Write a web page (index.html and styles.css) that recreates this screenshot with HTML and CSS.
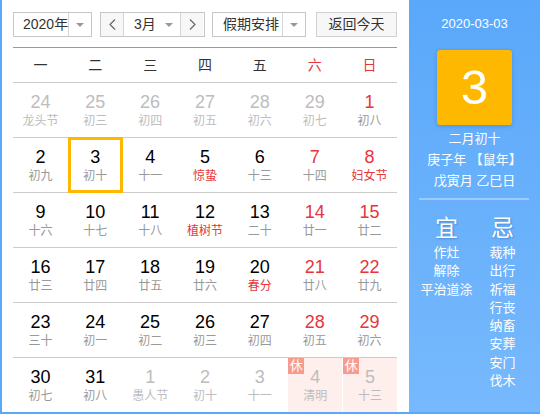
FILE: index.html
```html
<!DOCTYPE html>
<html lang="zh-CN">
<head>
    <meta charset="UTF-8">
    <title>万年历</title>
    <link rel="stylesheet" href="styles.css">
</head>
<body>
    <div class="calendar">
        <div class="main">
            <div class="toolbar">
                <div class="select year">
                    <span class="select-text">2020年</span>
                    <span class="select-arrow"><i class="caret"></i></span>
                </div>
                <div class="month-group">
                    <span class="nav-btn">
                        <svg width="7" height="11" viewBox="0 0 7 11"><polyline points="6,0.5 1,5.5 6,10.5" fill="none" stroke="#666" stroke-width="1.2"/></svg>
                    </span>
                    <span class="month-select">
                        <span class="select-text">3月</span>
                        <i class="caret"></i>
                    </span>
                    <span class="nav-btn">
                        <svg width="7" height="11" viewBox="0 0 7 11"><polyline points="1,0.5 6,5.5 1,10.5" fill="none" stroke="#666" stroke-width="1.2"/></svg>
                    </span>
                </div>
                <div class="select holiday">
                    <span class="select-text">假期安排</span>
                    <span class="select-arrow"><i class="caret"></i></span>
                </div>
                <div class="today-btn">返回今天</div>
            </div>

            <div class="grid">
                <div class="week">一</div>
                <div class="week">二</div>
                <div class="week">三</div>
                <div class="week">四</div>
                <div class="week">五</div>
                <div class="week weekend">六</div>
                <div class="week weekend">日</div>

                <div class="day other"><b>24</b><span>龙头节</span></div>
                <div class="day other"><b>25</b><span>初三</span></div>
                <div class="day other"><b>26</b><span>初四</span></div>
                <div class="day other"><b>27</b><span>初五</span></div>
                <div class="day other"><b>28</b><span>初六</span></div>
                <div class="day other"><b>29</b><span>初七</span></div>
                <div class="day weekend"><b>1</b><span>初八</span></div>

                <div class="day"><b>2</b><span>初九</span></div>
                <div class="day selected"><b>3</b><span>初十</span></div>
                <div class="day"><b>4</b><span>十一</span></div>
                <div class="day"><b>5</b><span class="festival">惊蛰</span></div>
                <div class="day"><b>6</b><span>十三</span></div>
                <div class="day weekend"><b>7</b><span>十四</span></div>
                <div class="day weekend"><b>8</b><span class="festival">妇女节</span></div>

                <div class="day"><b>9</b><span>十六</span></div>
                <div class="day"><b>10</b><span>十七</span></div>
                <div class="day"><b>11</b><span>十八</span></div>
                <div class="day"><b>12</b><span class="festival">植树节</span></div>
                <div class="day"><b>13</b><span>二十</span></div>
                <div class="day weekend"><b>14</b><span>廿一</span></div>
                <div class="day weekend"><b>15</b><span>廿二</span></div>

                <div class="day"><b>16</b><span>廿三</span></div>
                <div class="day"><b>17</b><span>廿四</span></div>
                <div class="day"><b>18</b><span>廿五</span></div>
                <div class="day"><b>19</b><span>廿六</span></div>
                <div class="day"><b>20</b><span class="festival">春分</span></div>
                <div class="day weekend"><b>21</b><span>廿八</span></div>
                <div class="day weekend"><b>22</b><span>廿九</span></div>

                <div class="day"><b>23</b><span>三十</span></div>
                <div class="day"><b>24</b><span>初一</span></div>
                <div class="day"><b>25</b><span>初二</span></div>
                <div class="day"><b>26</b><span>初三</span></div>
                <div class="day"><b>27</b><span>初四</span></div>
                <div class="day weekend"><b>28</b><span>初五</span></div>
                <div class="day weekend"><b>29</b><span>初六</span></div>

                <div class="day last"><b>30</b><span>初七</span></div>
                <div class="day last"><b>31</b><span>初八</span></div>
                <div class="day last other"><b>1</b><span>愚人节</span></div>
                <div class="day last other"><b>2</b><span>初十</span></div>
                <div class="day last other"><b>3</b><span>十一</span></div>
                <div class="day last other rest"><em class="badge">休</em><b>4</b><span>清明</span></div>
                <div class="day last other rest"><em class="badge">休</em><b>5</b><span>十三</span></div>
            </div>
        </div>

        <div class="side">
            <div class="side-date">2020-03-03</div>
            <div class="big-day">3</div>
            <div class="lunar">
                <div>二月初十</div>
                <div>庚子年 【鼠年】</div>
                <div>戊寅月 乙巳日</div>
            </div>
            <div class="divider"></div>
            <div class="almanac">
                <div class="almanac-col">
                    <div class="almanac-title">宜</div>
                    <div>作灶</div>
                    <div>解除</div>
                    <div>平治道涂</div>
                </div>
                <div class="almanac-col">
                    <div class="almanac-title">忌</div>
                    <div>裁种</div>
                    <div>出行</div>
                    <div>祈福</div>
                    <div>行丧</div>
                    <div>纳畜</div>
                    <div>安葬</div>
                    <div>安门</div>
                    <div>伐木</div>
                </div>
            </div>
        </div>
    </div>
</body>
</html>
```

FILE: styles.css
```css
body {
    margin: 0;
    padding: 0;
    font-family: "Liberation Sans", "Noto Sans CJK SC", sans-serif;
    background-color: #fff;
}
.calendar {
    display: flex;
    width: 538px;
    height: 412px;
    border-left: 2px solid #5aa8fa;
    border-bottom: 2px solid #5aa8fa;
}
.main {
    width: 384px;
    padding: 12px 12px 0 11px;
    background-color: #fff;
}
.toolbar {
    display: flex;
    height: 25px;
    padding-bottom: 10px;
    border-bottom: 1px solid #5aa8fa;
    font-size: 14px;
    color: #333;
}
.select {
    display: flex;
    box-sizing: border-box;
    height: 25px;
    border: 1px solid #c6c6c6;
    background-color: #fff;
}
.select-text {
    flex: 1;
    line-height: 23px;
    padding-left: 10px;
    white-space: nowrap;
}
.select-arrow {
    width: 22px;
    flex: none;
    border-left: 1px solid #d6d6d6;
    display: flex;
    align-items: center;
    justify-content: center;
}
.caret {
    width: 0;
    height: 0;
    border-left: 4px solid transparent;
    border-right: 4px solid transparent;
    border-top: 4px solid #999;
}
.year {
    width: 79px;
}
.year .select-text {
    padding-left: 9px;
}
.month-group {
    display: flex;
    box-sizing: border-box;
    width: 105px;
    height: 25px;
    margin-left: 8px;
    border: 1px solid #c6c6c6;
}
.nav-btn {
    width: 22px;
    display: flex;
    align-items: center;
    justify-content: center;
    background-color: #f7f7f7;
}
.month-select {
    display: flex;
    align-items: center;
    width: 58px;
    border-left: 1px solid #d6d6d6;
    border-right: 1px solid #d6d6d6;
    padding-right: 7px;
    box-sizing: border-box;
    background-color: #fff;
}
.holiday {
    width: 94px;
    margin-left: 7px;
}
.today-btn {
    box-sizing: border-box;
    width: 81px;
    height: 25px;
    margin-left: 10px;
    line-height: 23px;
    text-align: center;
    border: 1px solid #d0d0d0;
    background-color: #f7f7f7;
}
.grid {
    display: grid;
    grid-template-columns: repeat(7, 1fr);
}
.week {
    height: 34px;
    line-height: 34px;
    text-align: center;
    font-size: 14px;
    color: #333;
    border-bottom: 1px solid #ccc;
}
.week.weekend {
    color: #e8353b;
}
.day {
    position: relative;
    box-sizing: border-box;
    height: 55px;
    padding-top: 9px;
    text-align: center;
    border-bottom: 1px solid #ccc;
}
.day.last {
    border-bottom: none;
    height: 54px;
}
.day b {
    display: block;
    font-weight: normal;
    font-size: 18px;
    line-height: 21px;
    color: #000;
}
.day span {
    display: block;
    font-size: 12px;
    line-height: 17px;
    color: #999;
}
.day.weekend b {
    color: #e8353b;
}
.day span.festival {
    color: #e8353b;
}
.day.other b,
.day.other span {
    color: #bdbdbd;
}
.day.selected::after {
    content: "";
    position: absolute;
    top: -1px;
    left: 0;
    right: 0;
    bottom: -1px;
    border: 3px solid #ffb800;
}
.day.rest {
    background-color: #feeeec;
    border-left: 1px solid #fff;
}
.badge {
    position: absolute;
    top: 0;
    left: 0;
    width: 16px;
    height: 16px;
    line-height: 16px;
    font-style: normal;
    font-size: 13px;
    color: #fff;
    background-color: #f69c8f;
}
.side {
    width: 131px;
    color: #fff;
    text-align: center;
    background: linear-gradient(#5aa8fa, #77b9fd);
    padding-top: 14px;
}
.side-date {
    font-size: 13px;
    line-height: 20px;
}
.big-day {
    width: 75px;
    height: 75px;
    margin: 16px auto 0;
    line-height: 75px;
    font-size: 49px;
    background-color: #ffb800;
    border-radius: 3px;
    box-shadow: 0 1px 4px rgba(0, 60, 140, 0.25);
}
.lunar {
    margin-top: 3px;
    font-size: 13px;
    line-height: 21px;
}
.divider {
    height: 2px;
    margin: 7px 11px 0 10px;
    background-color: rgba(255, 255, 255, 0.35);
}
.almanac {
    display: flex;
    justify-content: center;
    margin-top: 13px;
    font-size: 13px;
    line-height: 18.3px;
}
.almanac-col {
    width: 56px;
}
.almanac-title {
    font-size: 23px;
    line-height: 31px;
    text-shadow: 1px 1px 2px rgba(0, 50, 120, 0.3);
}
```
